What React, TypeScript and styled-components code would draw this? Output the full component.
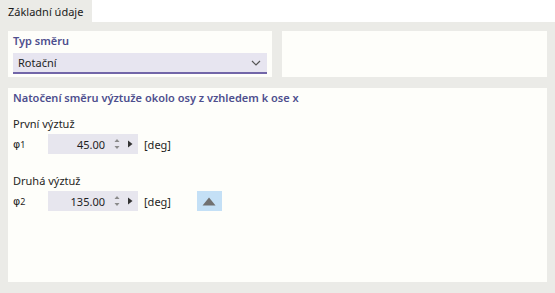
import styled, { createGlobalStyle } from "styled-components";

const GlobalStyle = createGlobalStyle`
  html, body {
    margin: 0;
    padding: 0;
    background: #ebebe7;
  }
  body {
    font-family: "Noto Sans", "Open Sans", sans-serif;
    font-size: 11px;
    color: #1e1e1e;
  }
`;

const Page = styled.div`
  width: 555px;
  height: 293px;
  display: flex;
  flex-direction: column;
  overflow: hidden;
`;

const TabBar = styled.div`
  height: 22px;
  background: #ffffff;
  display: flex;
`;

const Tab = styled.div`
  width: 92px;
  background: #ebebe7;
  display: flex;
  align-items: center;
  padding-left: 8px;
  box-sizing: border-box;
  color: #1a1a1a;
`;

const Content = styled.div`
  flex: 1;
  display: flex;
  flex-direction: column;
  gap: 11px;
  padding: 9px 8px 11px 8px;
`;

const TopRow = styled.div`
  display: grid;
  grid-template-columns: 264px 1fr;
  gap: 10px;
`;

const Panel = styled.div<{ $grow?: boolean }>`
  background: #fefefa;
  box-sizing: border-box;
  padding: 1px 5px 3px 5px;
  display: flex;
  flex-direction: column;
  ${(p) => (p.$grow ? "flex: 1;" : "height: 46px;")}
`;

const GroupLabel = styled.div`
  height: 18px;
  line-height: 18px;
  font-weight: 600;
  color: #4e4f8e;
`;

const Select = styled.div`
  margin-top: 3px;
  width: 254px;
  height: 22px;
  box-sizing: border-box;
  background: #e7e5f0;
  border-bottom: 2px solid #7266a8;
  display: flex;
  align-items: center;
  justify-content: space-between;
  padding: 0 6px 0 5px;
`;

const SubTitle = styled.div<{ $gap: number }>`
  margin-top: ${(p) => p.$gap}px;
  height: 18px;
  line-height: 18px;
`;

const Row = styled.div`
  display: flex;
  align-items: center;
  height: 20px;
  margin-top: 1px;
`;

const Symbol = styled.div`
  width: 35px;
  font-family: "DejaVu Sans", sans-serif;
  font-size: 11px;
  & sub {
    font-family: "Noto Sans", sans-serif;
    font-size: 9px;
    vertical-align: baseline;
  }
`;

const NumberBox = styled.div`
  width: 90px;
  height: 20px;
  background: #e7e6ee;
  display: flex;
  align-items: center;
  box-sizing: border-box;
`;

const Value = styled.span`
  flex: 1;
  text-align: right;
  padding-right: 8px;
`;

const Spin = styled.svg`
  width: 8px;
  height: 14px;
  margin-right: 6px;
`;

const Play = styled.svg`
  width: 6px;
  height: 8px;
  margin-right: 5px;
`;

const Unit = styled.span`
  margin-left: 6px;
`;

const ArrowButton = styled.div`
  margin-left: 26px;
  width: 25px;
  height: 20px;
  background: #c4e0f6;
  display: flex;
  align-items: center;
  justify-content: center;
`;

const SpinField = ({ value }: { value: string }) => (
  <NumberBox>
    <Value>{value}</Value>
    <Spin viewBox="0 0 8 14">
      <path d="M4 2 L6.5 5 L1.5 5 Z" fill="#8a8a8a" />
      <path d="M4 12 L6.5 9 L1.5 9 Z" fill="#8a8a8a" />
    </Spin>
    <Play viewBox="0 0 6 8">
      <path d="M1 0.5 L5.5 4 L1 7.5 Z" fill="#333" />
    </Play>
  </NumberBox>
);

const App = () => {
  return (
    <Page>
      <GlobalStyle />
      <TabBar>
        <Tab>Základní údaje</Tab>
      </TabBar>
      <Content>
        <TopRow>
          <Panel>
            <GroupLabel>Typ směru</GroupLabel>
            <Select>
              <span>Rotační</span>
              <svg width="10" height="6" viewBox="0 0 10 6">
                <path d="M1 1 L5 5 L9 1" stroke="#555" strokeWidth="1.2" fill="none" />
              </svg>
            </Select>
          </Panel>
          <Panel />
        </TopRow>
        <Panel $grow>
          <GroupLabel>Natočení směru výztuže okolo osy z vzhledem k ose x</GroupLabel>
          <SubTitle $gap={8}>První výztuž</SubTitle>
          <Row>
            <Symbol>
              φ<sub>1</sub>
            </Symbol>
            <SpinField value="45.00" />
            <Unit>[deg]</Unit>
          </Row>
          <SubTitle $gap={18}>Druhá výztuž</SubTitle>
          <Row>
            <Symbol>
              φ<sub>2</sub>
            </Symbol>
            <SpinField value="135.00" />
            <Unit>[deg]</Unit>
            <ArrowButton>
              <svg width="14" height="9" viewBox="0 0 14 9">
                <path d="M7 0.5 L13.5 8.5 L0.5 8.5 Z" fill="#707070" />
              </svg>
            </ArrowButton>
          </Row>
        </Panel>
      </Content>
    </Page>
  );
};

export default App;
